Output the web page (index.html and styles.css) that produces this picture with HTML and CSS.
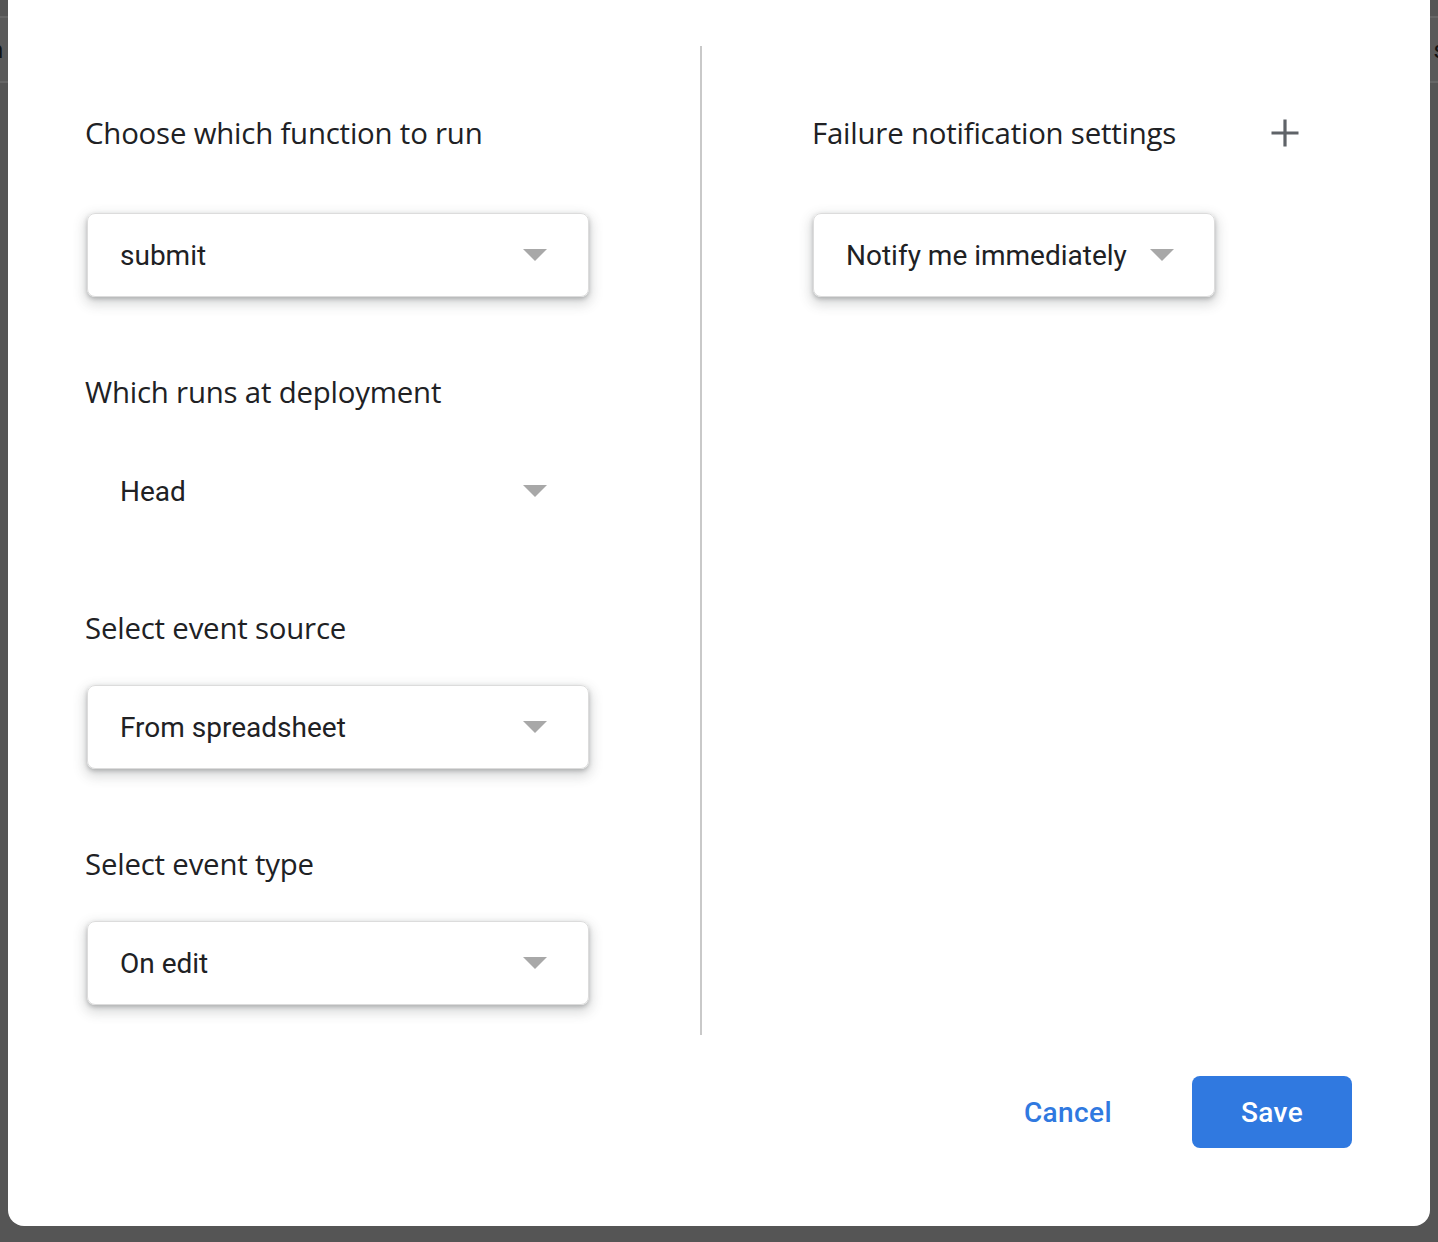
FILE: index.html
```html
<!DOCTYPE html>
<html lang="en">
<head>
<meta charset="utf-8">
<title>Add trigger</title>
<link rel="stylesheet" href="styles.css">
</head>
<body>
<div class="backdrop">
  <div class="bar"><span class="peek peek-left">n</span><span class="peek peek-right">s</span></div>
</div>
<div class="dialog">
  <div class="content">
    <div class="col col-left">
      <section class="field">
        <h2 class="label label-first">Choose which function to run</h2>
        <div class="select raised wide"><span>submit</span><i class="caret"></i></div>
      </section>
      <section class="field">
        <h2 class="label">Which runs at deployment</h2>
        <div class="select flat wide"><span>Head</span><i class="caret"></i></div>
      </section>
      <section class="field">
        <h2 class="label">Select event source</h2>
        <div class="select raised wide"><span>From spreadsheet</span><i class="caret"></i></div>
      </section>
      <section class="field">
        <h2 class="label">Select event type</h2>
        <div class="select raised wide"><span>On edit</span><i class="caret"></i></div>
      </section>
    </div>
    <div class="divider"></div>
    <div class="col col-right">
      <div class="label-row">
        <h2 class="label">Failure notification settings</h2>
        <svg class="plus" width="30" height="30" viewBox="0 0 30 30" aria-hidden="true"><path d="M15 1.5v27M1.5 15h27" stroke="#5f6368" stroke-width="3.2" fill="none"/></svg>
      </div>
      <div class="select raised narrow"><span>Notify me immediately</span><i class="caret"></i></div>
    </div>
  </div>
  <div class="footer">
    <button class="btn btn-text">Cancel</button>
    <button class="btn btn-primary">Save</button>
  </div>
</div>
</body>
</html>
```
FILE: styles.css
```css
* { box-sizing: border-box; }
html, body { margin: 0; padding: 0; }
body {
  width: 1438px;
  height: 1242px;
  overflow: hidden;
  background: #555555;
  font-family: Roboto, "Liberation Sans", Arial, sans-serif;
  position: relative;
}
.backdrop { padding-top: 16px; }
.bar {
  height: 67px;
  border-top: 2px solid #666666;
  border-bottom: 2px solid #666666;
  display: flex;
  justify-content: space-between;
  align-items: center;
  background: #5a5a5a;
}
.peek { font-size: 24px; color: #111; line-height: 1; }
.peek-left { margin-left: -10px; }
.peek-right { margin-right: -8px; }

.dialog {
  position: absolute;
  top: 0;
  left: 8px;
  width: 1422px;
  height: 1226px;
  background: #ffffff;
  border-radius: 0 0 16px 16px;
  display: flex;
  flex-direction: column;
}
.content {
  display: flex;
  margin-top: 46px;
  height: 989px;
}
.col { padding-top: 67px; }
.col-left { width: 692px; padding-left: 79px; }
.col-right { padding-left: 111px; }
.divider { width: 2px; background: #c9c9c9; }

.label {
  margin: 0 0 37px -2px;
  font-family: "Open Sans", Roboto, sans-serif;
  font-weight: 400;
  font-size: 29.4px;
  line-height: 40px;
  color: #202124;
  letter-spacing: -0.2px;
}
.label-first { margin-bottom: 60px; }

.select {
  height: 84px;
  display: flex;
  align-items: center;
  justify-content: space-between;
  padding: 0 41px 0 32px;
  font-size: 28px;
  color: #202124;
  margin-bottom: 75px;
  border-radius: 8px;
}
.wide { width: 502px; }
.narrow { width: 402px; padding-right: 40px; }
.raised {
  border: 1px solid #dcdcdc;
  box-shadow: 0 2px 4px rgba(60, 64, 67, 0.3), 0 5px 12px 3px rgba(60, 64, 67, 0.18);
}
.flat { border: 1px solid transparent; }
.caret {
  width: 0;
  height: 0;
  border-left: 12px solid transparent;
  border-right: 12px solid transparent;
  border-top: 12px solid #a8a8a8;
}

.label-row {
  width: 487px;
  display: flex;
  align-items: center;
  justify-content: space-between;
  margin-bottom: 60px;
}
.label-row .label { margin: 0 0 0 -1px; }
.plus { display: block; }

.footer {
  display: flex;
  justify-content: flex-end;
  gap: 44px;
  padding: 41px 78px 0 0;
}
.btn {
  width: 160px;
  height: 72px;
  border: none;
  border-radius: 8px;
  font-family: Roboto, "Liberation Sans", sans-serif;
  font-weight: 500;
  font-size: 28px;
  letter-spacing: 0.4px;
  cursor: pointer;
}
.btn-text { background: transparent; color: #3079e0; }
.btn-primary { background: #3079e0; color: #ffffff; }
```
